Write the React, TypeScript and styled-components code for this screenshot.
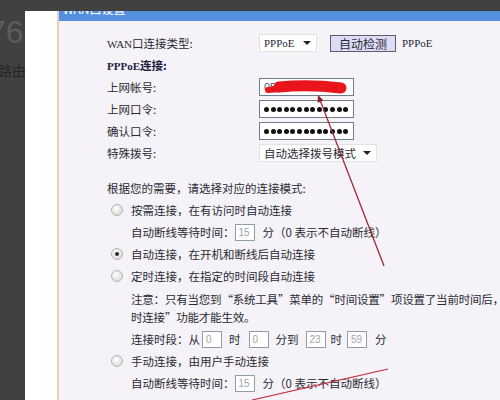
import styled, { createGlobalStyle } from "styled-components";

const GlobalStyle = createGlobalStyle`
  html, body {
    margin: 0;
    padding: 0;
    background: #414141;
  }
  body {
    width: 500px;
    height: 400px;
    overflow: hidden;
  }
`;

const Screen = styled.div`
  position: relative;
  display: flex;
  width: 500px;
  height: 400px;
  overflow: hidden;
  font-family: "Noto Sans CJK SC", "Noto Sans", sans-serif;
  color: #2a2a35;
`;

const Side = styled.aside`
  flex: none;
  width: 25px;
  background: #414141;
  overflow: hidden;
  white-space: nowrap;
`;

const BigNumber = styled.div`
  margin: 15px 0 0 -12px;
  font-family: "Liberation Sans", sans-serif;
  font-size: 32px;
  line-height: 34px;
  color: #5c5c5c;
`;

const SideText = styled.div`
  margin: 12px 0 0 -2px;
  font-size: 14px;
  line-height: 18px;
  color: #262626;
`;

const Main = styled.div`
  flex: 1;
  display: flex;
  flex-direction: column;
`;

const TopStrip = styled.div`
  height: 11px;
  background: #414141;
`;

const Sheet = styled.div`
  flex: 1;
  display: flex;
  background: #ffffff;
`;

const Gutter = styled.div`
  width: 32px;
  flex: none;
`;

const Panel = styled.section`
  flex: 1;
  display: flex;
  flex-direction: column;
  border-left: 2px solid #e4cfba;
  background: #f5f3f7;
  overflow: hidden;
`;

const Header = styled.div`
  height: 10px;
  background: #5590df;
  overflow: hidden;
  color: #fff;
  font-size: 12px;
  line-height: 12px;
  padding-left: 4px;

  span {
    display: block;
    margin-top: -8px;
  }
`;

const Body = styled.div`
  padding: 11px 0 0 48px;
  font-size: 11.5px;
`;

const FormGrid = styled.div`
  display: grid;
  grid-template-columns: 152px 1fr;
  grid-auto-rows: 22px;
  align-items: center;
`;

const Label = styled.div<{ $bold?: boolean }>`
  white-space: nowrap;
  font-weight: ${(p) => (p.$bold ? 700 : 400)};
  color: ${(p) => (p.$bold ? "#1f2244" : "inherit")};
`;

const Latin = styled.span`
  font-family: "Liberation Serif", serif;
  font-size: 11px;
`;

const Controls = styled.div`
  display: flex;
  align-items: center;
`;

const SelectBox = styled.div<{ $width: number }>`
  box-sizing: border-box;
  width: ${(p) => p.$width}px;
  height: 18px;
  display: flex;
  align-items: center;
  justify-content: space-between;
  padding: 0 5px 0 4px;
  background: #fff;
  border: 1px solid #e3e3e6;
  white-space: nowrap;
`;

const Caret = styled.span`
  width: 0;
  height: 0;
  border-left: 4px solid transparent;
  border-right: 4px solid transparent;
  border-top: 4px solid #222;
`;

const DetectButton = styled.button`
  box-sizing: border-box;
  width: 66px;
  height: 17px;
  margin-left: 13px;
  padding: 0;
  background: #dcdcf5;
  border: 1px solid #5c5c6c;
  font-family: "Noto Sans CJK SC", sans-serif;
  font-size: 12px;
  line-height: 15px;
  color: #2a2a35;
`;

const DetectResult = styled(Latin)`
  margin-left: 6px;
`;

const TextBox = styled.div`
  box-sizing: border-box;
  width: 95px;
  height: 18px;
  display: flex;
  align-items: center;
  gap: 1.6px;
  padding-left: 4px;
  background: #fff;
  border: 1px solid #6f7d8c;
  color: #555;
  font-family: "Liberation Sans", sans-serif;
  font-size: 11px;
`;

const Dot = styled.span`
  width: 5px;
  height: 5px;
  border-radius: 50%;
  background: #111;
`;

const Intro = styled.div`
  margin-top: 13px;
  height: 22px;
  line-height: 22px;
  white-space: nowrap;
`;

const RadioRow = styled.div`
  height: 22px;
  display: flex;
  align-items: center;
  gap: 8px;
  padding-left: 4px;
  white-space: nowrap;
`;

const Radio = styled.span<{ $checked?: boolean }>`
  position: relative;
  box-sizing: border-box;
  width: 12px;
  height: 12px;
  border-radius: 50%;
  border: 1px solid #b3b3b3;
  background: radial-gradient(circle at 40% 35%, #ffffff 0%, #e4e4e4 60%, #cfcfcf 100%);

  &::after {
    content: "";
    display: ${(p) => (p.$checked ? "block" : "none")};
    position: absolute;
    left: 3px;
    top: 3px;
    width: 4px;
    height: 4px;
    border-radius: 50%;
    background: #2a2a2a;
  }
`;

const SubRow = styled.div`
  height: 22px;
  display: flex;
  align-items: center;
  padding-left: 24px;
  white-space: nowrap;
`;

const NumBox = styled.span<{ $gapLeft?: number; $gapRight?: number }>`
  box-sizing: border-box;
  width: 20px;
  height: 17px;
  margin: 0 ${(p) => p.$gapRight ?? 7}px 0 ${(p) => p.$gapLeft ?? 0}px;
  padding-left: 3px;
  background: #fff;
  border: 1px solid #8e9dab;
  color: #a3a3a3;
  font-family: "Liberation Sans", sans-serif;
  font-size: 10px;
  line-height: 15px;
`;

const Note = styled.div`
  margin: 3px 0 2px;
  padding-left: 24px;
  line-height: 18px;
  white-space: nowrap;
  letter-spacing: -0.2px;
`;

const Marks = styled.svg`
  position: absolute;
  left: 0;
  top: 0;
  pointer-events: none;
`;

const dots = Array.from({ length: 13 });

export default function App() {
  return (
    <>
      <GlobalStyle />
      <Screen>
        <Side>
          <BigNumber>76</BigNumber>
          <SideText>路由</SideText>
        </Side>
        <Main>
          <TopStrip />
          <Sheet>
            <Gutter />
            <Panel>
              <Header>
                <span>WAN口设置</span>
              </Header>
              <Body>
                <FormGrid>
                  <Label>
                    <Latin>WAN</Latin>口连接类型:
                  </Label>
                  <Controls>
                    <SelectBox $width={58}>
                      <Latin>PPPoE</Latin>
                      <Caret />
                    </SelectBox>
                    <DetectButton>自动检测</DetectButton>
                    <DetectResult>PPPoE</DetectResult>
                  </Controls>

                  <Label $bold>
                    <Latin>PPPoE</Latin>连接:
                  </Label>
                  <div />

                  <Label>上网帐号:</Label>
                  <Controls>
                    <TextBox>05</TextBox>
                  </Controls>

                  <Label>上网口令:</Label>
                  <Controls>
                    <TextBox>
                      {dots.map((_, i) => (
                        <Dot key={i} />
                      ))}
                    </TextBox>
                  </Controls>

                  <Label>确认口令:</Label>
                  <Controls>
                    <TextBox>
                      {dots.map((_, i) => (
                        <Dot key={i} />
                      ))}
                    </TextBox>
                  </Controls>

                  <Label>特殊拨号:</Label>
                  <Controls>
                    <SelectBox $width={118}>
                      <span>自动选择拨号模式</span>
                      <Caret />
                    </SelectBox>
                  </Controls>
                </FormGrid>

                <Intro>根据您的需要，请选择对应的连接模式:</Intro>

                <RadioRow>
                  <Radio />
                  按需连接，在有访问时自动连接
                </RadioRow>
                <SubRow>
                  自动断线等待时间：<NumBox $gapRight={8}>15</NumBox>分（0 表示不自动断线）
                </SubRow>
                <RadioRow>
                  <Radio $checked />
                  自动连接，在开机和断线后自动连接
                </RadioRow>
                <RadioRow>
                  <Radio />
                  定时连接，在指定的时间段自动连接
                </RadioRow>
                <Note>
                  注意：只有当您到“系统工具”菜单的“时间设置”项设置了当前时间后，“定
                  <br />
                  时连接”功能才能生效。
                </Note>
                <SubRow>
                  连接时段：从<NumBox $gapLeft={2}>0</NumBox>时<NumBox $gapLeft={8}>0</NumBox>分到
                  <NumBox $gapLeft={7} $gapRight={5}>23</NumBox>时
                  <NumBox $gapLeft={5} $gapRight={8}>59</NumBox>分
                </SubRow>
                <RadioRow>
                  <Radio />
                  手动连接，由用户手动连接
                </RadioRow>
                <SubRow>
                  自动断线等待时间：<NumBox $gapRight={8}>15</NumBox>分（0 表示不自动断线）
                </SubRow>
              </Body>
            </Panel>
          </Sheet>
        </Main>

        <Marks width="500" height="400" viewBox="0 0 500 400">
          <path d="M268 90 L281 89" stroke="#e8161c" strokeWidth="6" strokeLinecap="round" fill="none" />
          <path d="M279 87 C300 85 325 86 341 88" stroke="#e8161c" strokeWidth="11" strokeLinecap="round" fill="none" />
          <line x1="320" y1="100" x2="384" y2="266" stroke="#9e2a3a" strokeWidth="1.3" />
          <polygon points="318,95 323.5,100.6 317.6,102.8" fill="#8b1e2c" />
          <line x1="252" y1="400" x2="388" y2="369" stroke="#c42a36" strokeWidth="1.2" />
        </Marks>
      </Screen>
    </>
  );
}
